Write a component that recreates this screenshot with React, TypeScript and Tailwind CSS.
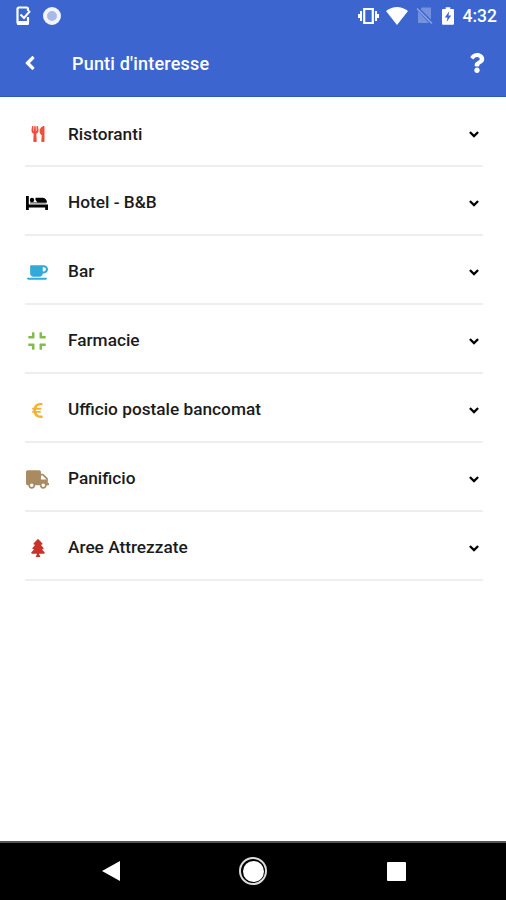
import type { ReactNode } from "react";
import {
  FaUtensils, FaCoffee, FaCompress, FaEuroSign, FaTruck, FaTree,
  FaAngleDown, FaAngleLeft, FaQuestion,
} from "react-icons/fa";

function BedIcon() {
  return (
    <svg width="22" height="16" viewBox="0 0 22 16" fill="currentColor" className="text-black">
      <path d="M0 1H2.8V9.5H22V15H19.2V12.5H2.8V15H0Z" />
      <circle cx="6" cy="5" r="2.2" />
      <path d="M4 7.5H20.5V8.3H4Z" />
      <path d="M9.5 2.8H17Q20.5 3.2 21 7.5H11.5L9.5 5Z" />
    </svg>
  );
}

const places: { label: string; icon: ReactNode }[] = [
  { label: "Ristoranti", icon: <FaUtensils className="ml-px h-4 w-4 text-[#ed513d]" /> },
  { label: "Hotel - B&B", icon: <BedIcon /> },
  { label: "Bar", icon: <FaCoffee className="ml-px h-[17px] w-[21px] text-[#32a9d9]" /> },
  { label: "Farmacie", icon: <FaCompress className="h-5 w-5 text-[#82bd49]" /> },
  { label: "Ufficio postale bancomat", icon: <FaEuroSign className="ml-px h-[17px] w-[17px] text-[#f3b32c]" /> },
  { label: "Panificio", icon: <FaTruck className="ml-px h-[19px] w-6 text-[#aa8a63]" /> },
  { label: "Aree Attrezzate", icon: <FaTree className="ml-px h-[18px] w-[18px] text-[#c73427]" /> },
];

function StatusBar() {
  return (
    <div className="flex h-[31px] items-center pr-[9px] pl-4">
      <svg width="15" height="20" viewBox="0 0 15 20" className="shrink-0">
        <path d="M12 5V3Q12 1.5 10.5 1.5H3Q1.5 1.5 1.5 3V16Q1.5 18 3 18H10.5Q12 18 12 16V11" fill="none" stroke="white" strokeWidth="2.2" />
        <path d="M1 15H13V17.5Q13 19 11.5 19H2.5Q1 19 1 17.5Z" fill="white" />
        <path d="M4.5 8.5L8 12L14 5" fill="none" stroke="white" strokeWidth="2" />
      </svg>
      <div className="ml-3 h-[18px] w-[18px] rounded-full border-[4px] border-[#f2f5ff] bg-[#a9b9e6]" />
      <div className="ml-auto flex items-center">
        <svg width="23" height="18" viewBox="0 0 23 18">
          <path d="M7.2 2H15.8V16H7.2Z" fill="none" stroke="white" strokeWidth="2.2" />
          <path d="M5 4V14H3V11H1V7H3V4ZM18 4V14H20V11H22V7H20V4Z" fill="white" />
        </svg>
        <svg width="22" height="18" viewBox="0 0 22 18" className="ml-[6px]">
          <path d="M0 4Q11-4 22 4L11 18Z" fill="white" />
        </svg>
        <svg width="17" height="19" viewBox="0 0 17 19" className="ml-2">
          <path d="M6 1.5H15V13.5L4.5 3Z M2 5L13 17H2Z" fill="#7590dc" />
          <path d="M1 2.5L16 17.5" stroke="#8ba4e4" strokeWidth="1.5" />
        </svg>
        <svg width="12" height="18" viewBox="0 0 13 19" className="ml-[9px]">
          <path d="M4 0H9V2H12Q13 2 13 3V18Q13 19 12 19H1Q0 19 0 18V3Q0 2 1 2H4Z" fill="white" />
          <path d="M8 4L3 11H6L5 16L10 9H7Z" fill="#3c65cf" />
        </svg>
        <span className="ml-[9px] text-[17.5px] leading-5 font-medium">4:32</span>
      </div>
    </div>
  );
}

export default function App() {
  return (
    <div className="flex h-[900px] w-[506px] flex-col bg-white font-['Roboto',sans-serif]">
      <header className="h-[97px] border-b border-[#2d56c2] bg-[#3c65cf] text-white">
        <StatusBar />
        <div className="flex h-[64px] items-center pr-[20px] pl-[22px]">
          <FaAngleLeft className="h-[22px] w-4" />
          <h1 className="ml-[34px] text-[18px] font-medium tracking-[0.2px]">Punti d'interesse</h1>
          <FaQuestion className="ml-auto h-5 w-[18px]" />
        </div>
      </header>
      <main className="grow pt-px pr-[23px] pl-[25px] text-[#1b1b1b]">
        {places.map((place) => (
          <div key={place.label} className="flex h-[68.95px] items-center border-b-2 border-[#eeeeee] pt-[6px] pr-[2px]">
            <span className="flex w-6 justify-center">{place.icon}</span>
            <span className="ml-[19px] text-[17.25px] font-medium">{place.label}</span>
            <FaAngleDown className="ml-auto h-[15px] w-[14px] text-black" />
          </div>
        ))}
      </main>
      <nav className="flex h-[59px] items-center border-t-2 border-[#555] bg-black pr-[100px] pb-px pl-[102px]">
        <svg width="18" height="22" viewBox="0 0 18 22"><path d="M0 11L18 1V21Z" fill="white" /></svg>
        <div className="ml-[119px] flex h-7 w-7 items-center justify-center rounded-full border-2 border-[#ddd]">
          <div className="h-[21px] w-[21px] rounded-full bg-white" />
        </div>
        <div className="ml-auto h-[19px] w-[19px] rounded-[1px] bg-white" />
      </nav>
    </div>
  );
}
